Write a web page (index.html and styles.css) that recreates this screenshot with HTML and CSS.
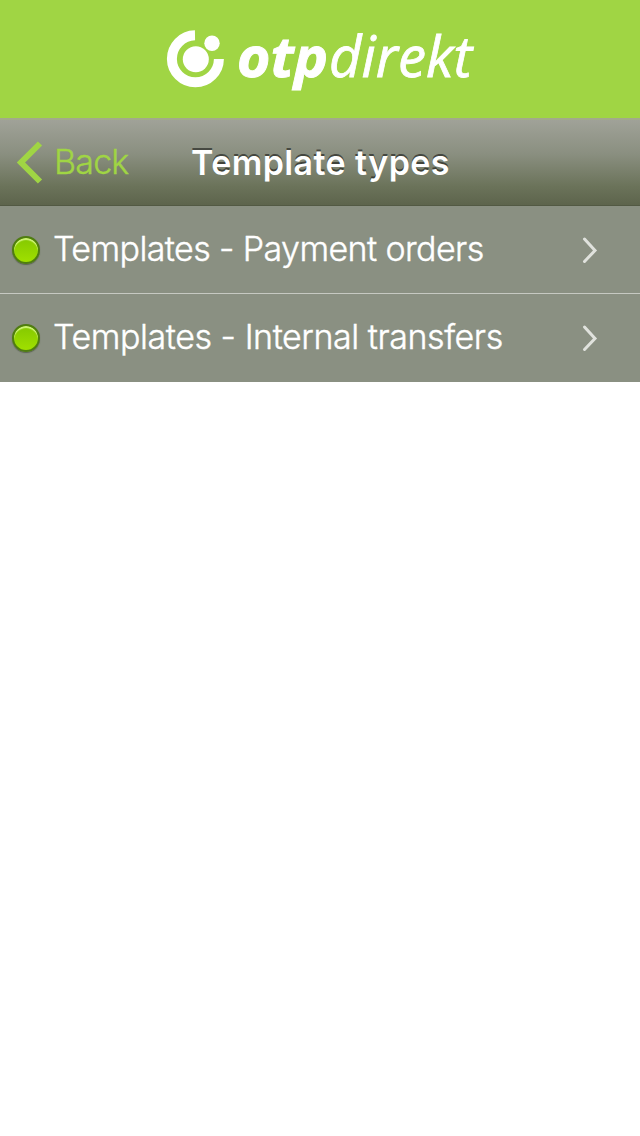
FILE: index.html
```html
<!DOCTYPE html>
<html lang="en">

<head>
  <meta charset="UTF-8">
  <meta name="viewport" content="width=device-width, initial-scale=1.0">
  <title>Template types</title>
  <link rel="stylesheet" href="styles.css">
</head>

<body>
  <header class="brand">
    <svg class="logo" width="320" height="118" viewBox="160 0 320 118" role="img" aria-label="otpdirekt">
      <path class="logo-ring" d="M195 35.3A23.5 23.5 0 1 0 218.9 59" />
      <circle cx="195.8" cy="59.3" r="13" />
      <circle cx="212" cy="43.3" r="7.7" />
      <text class="logo-otp" x="237" y="77" textLength="91" lengthAdjust="spacingAndGlyphs">otp</text>
      <text class="logo-direkt" x="329" y="77" textLength="143" lengthAdjust="spacingAndGlyphs">direkt</text>
    </svg>
  </header>

  <nav class="navbar">
    <a class="back" href="#">
      <svg class="back-arrow" width="28" height="44" viewBox="0 0 28 44">
        <path d="M25 2.500L6 21.500L25 40.500" />
      </svg>
      <span class="back-label">Back</span>
    </a>
    <h1 class="title">Template types</h1>
  </nav>

  <ul class="list">
    <li class="item">
      <span class="bullet"></span>
      <span class="label label-payment">Templates - Payment orders</span>
      <svg class="chevron" width="16" height="28" viewBox="0 0 16 28">
        <path d="M2.500 3L13 14.500L2.500 25.500" />
      </svg>
    </li>
    <li class="item">
      <span class="bullet"></span>
      <span class="label label-internal">Templates - Internal transfers</span>
      <svg class="chevron" width="16" height="28" viewBox="0 0 16 28">
        <path d="M2.500 3L13 14.500L2.500 25.500" />
      </svg>
    </li>
  </ul>
</body>

</html>
```
FILE: styles.css
```css
* {
  margin: 0;
  padding: 0;
  box-sizing: border-box;
}

:root {
  --green: #a0d544;
  --row-bg: #8a9082;
}

body {
  background: #fff;
  font-family: Inter, "Liberation Sans", sans-serif;
  font-size: 34px;
}

/* logo bar */
.brand {
  display: flex;
  justify-content: center;
  height: 118px;
  background: var(--green);
}

.logo {
  fill: #fff;
  font-family: "Open Sans", sans-serif;
  font-style: italic;
}

.logo-ring {
  fill: none;
  stroke: #fff;
  stroke-width: 10;
}

.logo-otp {
  font-size: 55px;
  font-weight: 700;
  stroke: #fff;
  stroke-width: .9;
}

.logo-direkt {
  font-size: 57px;
  font-weight: 400;
  stroke: #fff;
  stroke-width: .8;
}

/* navigation bar */
.navbar {
  display: grid;
  grid-template-columns: 191px 1fr;
  align-items: center;
  height: 88px;
  border-top: 2px solid #a3aa8c;
  border-bottom: 1px solid #525943;
  background: linear-gradient(#a0a298, #8a8f80 40%, #6b735a 78%, #5d644c);
}

.back {
  display: flex;
  align-items: center;
  padding-left: 15px;
  color: var(--green);
  text-decoration: none;
}

.back-arrow {
  fill: none;
  stroke: var(--green);
  stroke-width: 6;
}

.back-label {
  margin-left: 11px;
  padding-bottom: 2px;
  font-weight: 300;
  letter-spacing: -.8px;
  -webkit-text-stroke: .4px;
}

.title {
  font-size: 34px;
  font-weight: 600;
  letter-spacing: .4px;
  color: #fff;
  text-shadow: 0 -2px 0 rgba(0, 0, 0, .5);
  white-space: nowrap;
}

/* menu rows */
.list {
  list-style: none;
}

.item {
  display: flex;
  align-items: center;
  height: 88px;
  padding: 0 42px 0 12px;
  background: var(--row-bg);
  color: #fff;

  &:not(:last-child) {
    border-bottom: 1px solid #c6c9c2;
  }
}

.bullet {
  width: 28px;
  height: 28px;
  border: 2px solid #4f7d10;
  border-radius: 50%;
  background: linear-gradient(#84c800, #a0e000);
  box-shadow: inset 0 2px 1px #d0f57a, 0 1px 1px rgba(60, 70, 50, .6);
}

.label {
  flex: 1;
  margin-left: 13px;
  padding-bottom: 3px;
  font-weight: 300;
  white-space: nowrap;
  /* between light and regular */
  -webkit-text-stroke: .4px;
}

.label-payment {
  letter-spacing: -.6px;
}

.label-internal {
  letter-spacing: -.45px;
}

.chevron {
  fill: none;
  stroke: #e0e2dd;
  stroke-width: 3;
  stroke-linecap: round;
}
```
